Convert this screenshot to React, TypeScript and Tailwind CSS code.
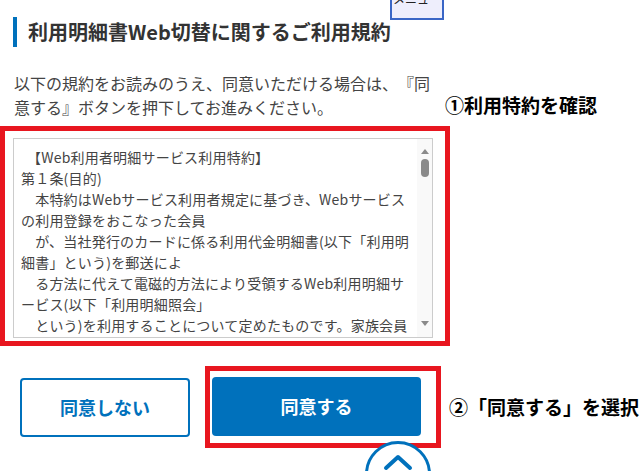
import React from 'react';

const jp = { fontFamily: '"Noto Sans CJK JP", "Noto Sans", sans-serif' };

// 規約本文（表示されている部分のみ）
const termsLines = [
  '【Web利用者明細サービス利用特約】',
  '第１条(目的)',
  '　本特約はWebサービス利用者規定に基づき、Webサービス',
  'の利用登録をおこなった会員',
  '　が、当社発行のカードに係る利用代金明細書(以下「利用明',
  '細書」という)を郵送によ',
  '　る方法に代えて電磁的方法により受領するWeb利用明細サ',
  'ービス(以下「利用明細照会」',
  '　という)を利用することについて定めたものです。家族会員',
];

const FakeScrollbar = () => (
  <div className="w-[15px] shrink-0 bg-[#f9f9f9] flex flex-col items-center">
    <svg width="10" height="8" viewBox="0 0 10 8" className="mt-[8px]">
      <path d="M1 7 L5 2 L9 7 Z" fill="#8a8a8a" />
    </svg>
    <div className="mt-[4px] w-[8px] h-[18px] rounded-full bg-[#8a8a8a]" />
    <div className="flex-1" />
    <svg width="10" height="8" viewBox="0 0 10 8" className="mb-[9px]">
      <path d="M1 1 L9 1 L5 6 Z" fill="#8a8a8a" />
    </svg>
  </div>
);

export default function App() {
  return (
    <div className="relative w-[644px] h-[471px] overflow-hidden bg-white [text-spacing-trim:space-all]" style={jp}>
      {/* fixed menu tab, cut off at the top */}
      <div className="absolute left-[390px] top-[-18px] w-[54px] h-[38px] bg-[#eeeefc] border-2 border-[#3a66c6] flex items-start justify-center pt-[8px] text-[12px] leading-[14px] text-[#222] whitespace-nowrap">
        メニュー
      </div>

      {/* Heading */}
      <div className="pt-[17px] pl-[13px]">
        <div className="h-[30px] border-l-4 border-[#0071bc] pl-[11px] flex items-center text-[20px] font-bold text-[#333] leading-none">
          利用明細書Web切替に関するご利用規約
        </div>
      </div>

      {/* Lead text + annotation */}
      <div className="flex items-end mt-[24px]">
        <p className="ml-[14px] w-[420px] text-[16px] leading-[24px] text-[#444]">
          以下の規約をお読みのうえ、同意いただける場合は、『同意する』ボタンを押下してお進みください。
        </p>
        <div className="ml-[11px] mb-[2px] text-[19px] leading-[24px] font-bold text-black whitespace-nowrap">
          ①利用特約を確認
        </div>
      </div>

      {/* Terms box with red highlight */}
      <div className="mt-[7px] w-[450px] border-[5px] border-[#e8161f] pt-[7px] pl-[8px] pr-[12px] pb-[3px]">
        <div className="h-[200px] border border-[#cccccc] flex overflow-hidden">
          <div className="flex-1 overflow-hidden pl-[7px] pt-[8px] text-[14px] leading-[21px] tracking-[0.2px] text-[#444] whitespace-pre">
            {termsLines.map((line, i) => (
              <div key={i} className={i === 0 ? 'pl-[6px]' : ''}>{line}</div>
            ))}
          </div>
          <FakeScrollbar />
        </div>
      </div>

      {/* Buttons */}
      <div className="flex items-center mt-[20px]">
        <button className="ml-[20px] w-[170px] h-[59px] rounded-[4px] border-2 border-[#0071bc] bg-white text-[#0071bc] text-[18px] font-bold">
          同意しない
        </button>
        <div className="ml-[15px] border-[5px] border-[#e8161f] pt-[6px] pb-[7px] pl-[2px] pr-[15px]">
          <button className="w-[209px] h-[59px] rounded-[4px] bg-[#0071bc] text-white text-[18px] font-bold">
            同意する
          </button>
        </div>
        <div className="ml-[8px] text-[19px] font-bold text-black whitespace-nowrap">
          ②「同意する」を選択
        </div>
      </div>

      {/* page-top button */}
      <div className="absolute left-[365px] top-[441px] w-[66px] h-[66px] rounded-full border-[3px] border-[#0071bc] bg-white flex justify-center">
        <svg width="30" height="18" viewBox="0 0 30 18" className="mt-[9px]">
          <path d="M3 15 L15 4 L27 15" fill="none" stroke="#0071bc" strokeWidth="4" strokeLinecap="round" strokeLinejoin="round" />
        </svg>
      </div>
    </div>
  );
}
